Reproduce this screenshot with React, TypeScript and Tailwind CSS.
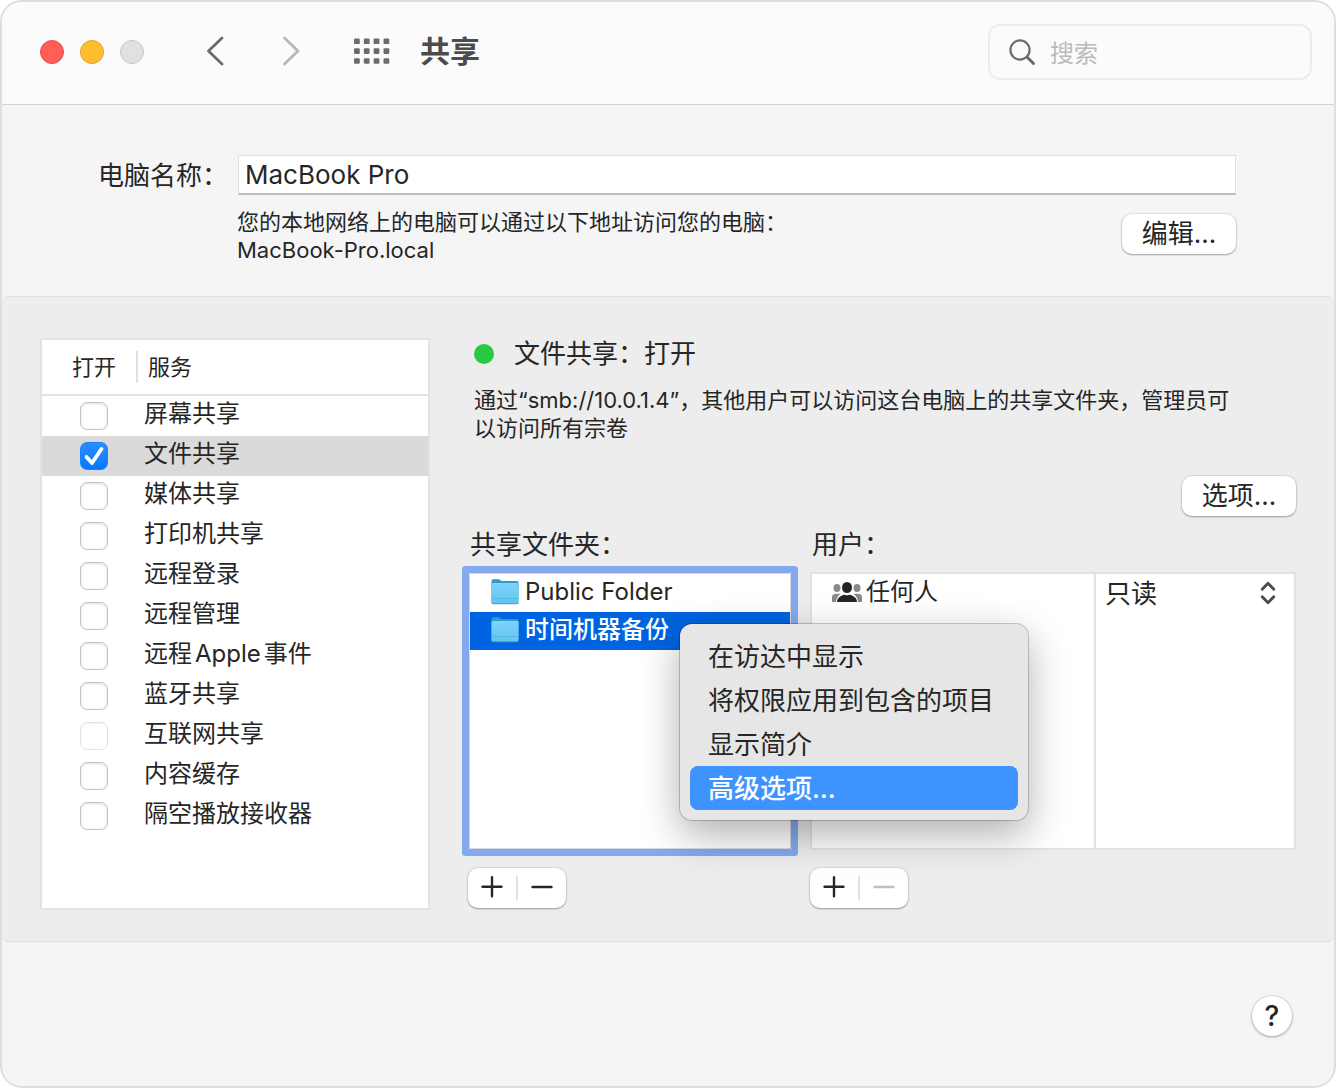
import { useState } from 'react'

const services = [
  { id: 'screen', name: '屏幕共享' },
  { id: 'file', name: '文件共享' },
  { id: 'media', name: '媒体共享' },
  { id: 'printer', name: '打印机共享' },
  { id: 'login', name: '远程登录' },
  { id: 'management', name: '远程管理' },
  { id: 'events', name: '远程Apple事件' },
  { id: 'bluetooth', name: '蓝牙共享' },
  { id: 'internet', name: '互联网共享', disabled: true },
  { id: 'cache', name: '内容缓存' },
  { id: 'airplay', name: '隔空播放接收器' },
]

const folders = ['Public Folder', '时间机器备份']

const menuItems = ['在访达中显示', '将权限应用到包含的项目', '显示简介', '高级选项…']

const FolderIcon = () => (
  <svg width="28" height="28" viewBox="0 0 28 28" aria-hidden="true">
    <defs>
      <linearGradient id="folderFront" x1="0" y1="0" x2="0" y2="1">
        <stop offset="0" stopColor="#7dd3fb" />
        <stop offset="1" stopColor="#62c4f1" />
      </linearGradient>
    </defs>
    <path d="M0.500 3Q0.500 1.200 2.200 1.200H7.500q1 0 1.800.8l1 1H26q1.500 0 1.500 1.500V10H0.500z" fill="#2f9cc9" />
    <rect x="0.500" y="5" width="27" height="21.300" rx="1.500" fill="#3f9fca" />
    <rect x="0.500" y="5" width="27" height="20.300" rx="1.500" fill="url(#folderFront)" />
    <path d="M1 20.500h26" stroke="#4fb2e0" strokeWidth="0.800" />
  </svg>
)

const PeopleIcon = () => (
  <svg width="30" height="22" viewBox="0 0 30 22" aria-hidden="true">
    <g fill="#8a8a8a">
      <ellipse cx="5" cy="7" rx="3.500" ry="4" />
      <ellipse cx="25" cy="7" rx="3.500" ry="4" />
      <path d="M0 21v-5q0-3 4-3.300h4.500Q4.500 16 4 21zM30 21v-5q0-3-4-3.300h-4.500Q25.500 16 26 21z" />
    </g>
    <ellipse cx="15" cy="6.500" rx="5" ry="5.500" fill="#262626" />
    <path d="M5 21q0-4.500 5-6.500 1.500-.6 2.500-.7 2.500 1 5 0 1 .1 2.500.7 5 2 5 6.500z" fill="#262626" />
  </svg>
)

const Header = () => {
  return (
    <header className="flex h-[103px] items-center border-b border-[#d0d0d0] bg-[#fbfbfb] pr-[22px] pb-[2px] pl-[38px]">
      {/* Window Buttons */}
      <div className="flex gap-4">
        <button aria-label="关闭" className="size-6 rounded-full border border-[#e2504a] bg-[#ff5f57]" />
        <button aria-label="最小化" className="size-6 rounded-full border border-[#e0a029] bg-[#febc2e]" />
        <button aria-label="缩放" className="size-6 rounded-full border border-[#c6c6c6] bg-[#e1e1e1]" />
      </div>
      {/* Navigation */}
      <div className="ml-[60px] flex items-center gap-12">
        <button aria-label="后退">
          <svg width="24" height="32" viewBox="0 0 24 32" fill="none" stroke="#6b6b6b" strokeWidth="2.800" strokeLinecap="round" strokeLinejoin="round">
            <path d="M18 2 4.500 15 18 28" />
          </svg>
        </button>
        <button aria-label="前进" className="pl-1">
          <svg width="24" height="32" viewBox="0 0 24 32" fill="none" stroke="#b8b8b8" strokeWidth="2.800" strokeLinecap="round" strokeLinejoin="round">
            <path d="M4.500 2 18 15 4.500 28" />
          </svg>
        </button>
        <button aria-label="显示全部">
          <svg width="38" height="28" viewBox="0 0 38 28" fill="#6b6b6b">
            {[0.5, 10.3, 20.2].map((y) =>
              [2, 11.8, 21.6, 31.5].map((x) => (
                <rect key={`${x}-${y}`} x={x} y={y} width="5.800" height="5.600" rx="1.200" />
              ))
            )}
          </svg>
        </button>
      </div>
      <h1 className="ml-[30px] pb-[2px] text-[30px] leading-8 font-bold text-[#4c4c4c]">共享</h1>
      {/* Search */}
      <label className="ml-auto flex h-14 w-[324px] items-center gap-3 rounded-xl border-2 border-[#ececec] pr-4 pl-[18px]">
        <svg width="30" height="30" viewBox="0 0 30 30" fill="none" stroke="#6b6b6b" strokeLinecap="round" aria-hidden="true" className="shrink-0">
          <circle cx="12" cy="13" r="9.600" strokeWidth="2.200" />
          <path d="M19 20l6.500 6.500" strokeWidth="3" />
        </svg>
        <input
          type="text"
          aria-label="搜索"
          placeholder="搜索"
          className="w-full min-w-0 bg-transparent pt-[3px] text-[24px] leading-8 outline-none placeholder:text-[#bababa]"
        />
      </label>
    </header>
  )
}

const PushButton = ({ children }: { children: string }) => (
  <button className="h-10 w-[114px] shrink-0 rounded-[10px] bg-white text-[26px] leading-8 shadow-[0_0_1px_1px_rgba(0,0,0,0.07),0_1px_2px_rgba(0,0,0,0.3)]">
    {children}
  </button>
)

const ComputerName = () => {
  return (
    <section className="pt-[50px] pr-[98px] pb-8 pl-24">
      <div className="flex items-center">
        <label htmlFor="computer-name" className="w-[140px] shrink-0 pt-[2px] text-[26px] leading-8">
          电脑名称：
        </label>
        <input
          id="computer-name"
          type="text"
          defaultValue="MacBook Pro"
          className="h-10 min-w-0 flex-1 border border-b-2 border-[#e0e0e0] border-b-[#bdbdbd] bg-white px-[6px] text-[26px] leading-8 outline-none"
        />
      </div>
      <div className="mt-[13px] flex items-start justify-between gap-4 pl-[139px]">
        <p className="text-[22px] leading-7">
          您的本地网络上的电脑可以通过以下地址访问您的电脑：
          <br />
          MacBook-Pro.local
        </p>
        <div className="pt-[6px]">
          <PushButton>编辑…</PushButton>
        </div>
      </div>
    </section>
  )
}

const ServiceList = () => {
  const [enabled, setEnabled] = useState(['file'])

  const toggle = (id: string) =>
    setEnabled((prev) => (prev.includes(id) ? prev.filter((item) => item !== id) : [...prev, id]))

  return (
    <div className="min-h-[572px] w-[390px] shrink-0 border-2 border-[#e3e3e3] bg-white">
      <table className="w-full table-fixed border-separate border-spacing-0 text-left">
        <thead>
          <tr className="h-14 text-[22px] leading-8">
            <th className="w-24 border-b-2 border-[#e3e3e3] p-0 font-normal">
              <div className="border-r-2 border-[#e0e0e0] pl-[30px]">打开</div>
            </th>
            <th className="border-b-2 border-[#e3e3e3] p-0 pl-[10px] font-normal">服务</th>
          </tr>
        </thead>
        <tbody>
          {services.map((service) => (
            <tr key={service.id} className={service.id === 'file' ? 'h-10 bg-[#dadada]' : 'h-10'}>
              <td className="p-0 pl-[38px]">
                <div className="relative size-7">
                  <input
                    id={service.id}
                    type="checkbox"
                    checked={enabled.includes(service.id)}
                    disabled={service.disabled}
                    onChange={() => toggle(service.id)}
                    className="peer block size-7 appearance-none rounded-[7px] border border-[#c4c4c4] bg-white shadow-[inset_0_1px_3px_rgba(0,0,0,0.14)] checked:border-[#1a84ff] checked:bg-linear-to-b checked:from-[#2a8dff] checked:to-[#0578ff] checked:shadow-none disabled:border-[#e4e4e4] disabled:shadow-[inset_0_1px_2px_rgba(0,0,0,0.05)]"
                  />
                  <svg
                    viewBox="0 0 28 28"
                    fill="none"
                    stroke="#fff"
                    strokeWidth="3.800"
                    strokeLinecap="round"
                    strokeLinejoin="round"
                    aria-hidden="true"
                    className="pointer-events-none absolute inset-0 hidden peer-checked:block"
                  >
                    <path d="M6.500 15 12 21 21.500 7" />
                  </svg>
                </div>
              </td>
              <td className="p-0 pb-1 pl-[6px]">
                <label htmlFor={service.id} className="block text-[24px] leading-8">
                  {service.name}
                </label>
              </td>
            </tr>
          ))}
        </tbody>
      </table>
    </div>
  )
}

const ContextMenu = () => (
  <div
    role="menu"
    className="absolute top-[51px] left-[211px] z-10 w-[348px] rounded-xl bg-[#e6e6e6] p-[10px] shadow-[0_0_0_1px_rgba(0,0,0,0.2),0_14px_40px_rgba(0,0,0,0.32)]"
  >
    {menuItems.map((item) => (
      <button
        key={item}
        role="menuitem"
        className="block h-11 w-full rounded-lg px-[18px] pt-[2px] text-left text-[26px] leading-8 last:bg-[#3f93ff] last:font-medium last:text-white"
      >
        {item}
      </button>
    ))}
  </div>
)

const AddRemove = ({ canRemove }: { canRemove: boolean }) => (
  <div className="mt-[18px] flex h-10 w-[98px] items-center rounded-[10px] bg-white shadow-[0_0_1px_1px_rgba(0,0,0,0.07),0_1px_2px_rgba(0,0,0,0.3)]">
    <button aria-label="添加" className="flex h-full flex-1 items-center justify-center">
      <svg width="22" height="24" viewBox="0 0 22 24" stroke="#262626" strokeWidth="2.400" strokeLinecap="round">
        <path d="M1.500 10.800h19M11 1.200v19" />
      </svg>
    </button>
    <div className="h-6 w-[2px] bg-[#e2e2e2]" />
    <button aria-label="移除" disabled={!canRemove} className="flex h-full flex-1 items-center justify-center text-[#262626] disabled:text-[#bfbfbf]">
      <svg width="22" height="24" viewBox="0 0 22 24" stroke="currentColor" strokeWidth="2.400" strokeLinecap="round">
        <path d="M1.500 11h19" />
      </svg>
    </button>
  </div>
)

const SharedFolders = () => {
  return (
    <div className="w-[324px] shrink-0">
      <h2 className="flex h-14 items-center pt-[2px] pl-[2px] text-[26px] leading-8">共享文件夹：</h2>
      <div className="relative h-[278px] rounded-[1px] border border-[#84a9f1] shadow-[0_0_0_6px_#84a9f1]">
        <ul role="listbox" aria-label="共享文件夹" className="h-full border border-[#d9d9d9] bg-white">
          {folders.map((folder) => (
            <li
              key={folder}
              role="option"
              aria-selected={folder === '时间机器备份'}
              className="flex h-[38px] items-center gap-[6px] pb-[2px] pl-[21px] text-[24px] leading-8 aria-selected:bg-[#0063e1] aria-selected:font-medium aria-selected:text-white"
            >
              <FolderIcon />
              {folder}
            </li>
          ))}
        </ul>
        <ContextMenu />
      </div>
      <AddRemove canRemove />
    </div>
  )
}

const Users = () => {
  return (
    <div className="min-w-0 flex-1">
      <h2 className="flex h-14 items-center pt-[2px] pl-[2px] text-[26px] leading-8">用户：</h2>
      <div className="flex h-[278px] border-2 border-[#e3e3e3] bg-white">
        <div className="flex-1 border-r-2 border-[#e3e3e3]">
          <div className="flex h-9 items-center gap-1 pl-5 text-[24px] leading-8">
            <PeopleIcon />
            任何人
          </div>
        </div>
        <div className="w-[198px]">
          <div className="relative">
            <select
              aria-label="权限"
              defaultValue="只读"
              className="h-10 w-full appearance-none bg-transparent pl-[9px] text-[26px] leading-8 outline-none"
            >
              <option>只读</option>
              <option>读与写</option>
              <option>只写（投件箱）</option>
            </select>
            <svg
              width="16"
              height="24"
              viewBox="0 0 16 24"
              fill="none"
              stroke="#4a4a4a"
              strokeWidth="2.800"
              strokeLinecap="round"
              strokeLinejoin="round"
              aria-hidden="true"
              className="pointer-events-none absolute top-[7px] right-[18px]"
            >
              <path d="M2.200 8.300 8 2.300l5.800 6M2.200 15.700l5.800 6 5.800-6" />
            </svg>
          </div>
        </div>
      </div>
      <AddRemove canRemove={false} />
    </div>
  )
}

const SharingDetail = () => {
  return (
    <div className="min-w-0 flex-1">
      <div className="flex items-center gap-5 pl-[6px] text-[26px] leading-8">
        <span className="size-5 rounded-full bg-[#28c840]" />
        文件共享：打开
      </div>
      <p className="mt-4 pl-[6px] text-[22px] leading-7">
        通过“smb://10.0.1.4”，其他用户可以访问这台电脑上的共享文件夹，管理员可
        <br />
        以访问所有宗卷
      </p>
      <div className="mt-[34px] flex justify-end">
        <PushButton>选项…</PushButton>
      </div>
      <div className="flex gap-[18px]">
        <SharedFolders />
        <Users />
      </div>
    </div>
  )
}

export default function App() {
  return (
    <div
      lang="zh-CN"
      className="flex min-h-screen flex-col overflow-hidden rounded-[22px] border-2 border-[#dedede] bg-[#f5f5f5] font-['Inter','Noto_Sans_CJK_SC',sans-serif] text-[#262626] [text-autospace:normal]"
    >
      <Header />
      <main>
        <ComputerName />
        <section className="flex gap-[38px] rounded-md border-y border-[#e0e0e0] bg-[#ededed] pt-[41px] pr-[38px] pb-[31px] pl-[38px]">
          <ServiceList />
          <SharingDetail />
        </section>
      </main>
      <footer className="flex justify-end pt-[54px] pr-[42px] pb-12">
        <button
          aria-label="帮助"
          className="size-10 rounded-full bg-white text-[28px] leading-10 font-medium shadow-[0_0_1px_1px_rgba(0,0,0,0.07),0_1px_3px_rgba(0,0,0,0.3)]"
        >
          ?
        </button>
      </footer>
    </div>
  )
}
